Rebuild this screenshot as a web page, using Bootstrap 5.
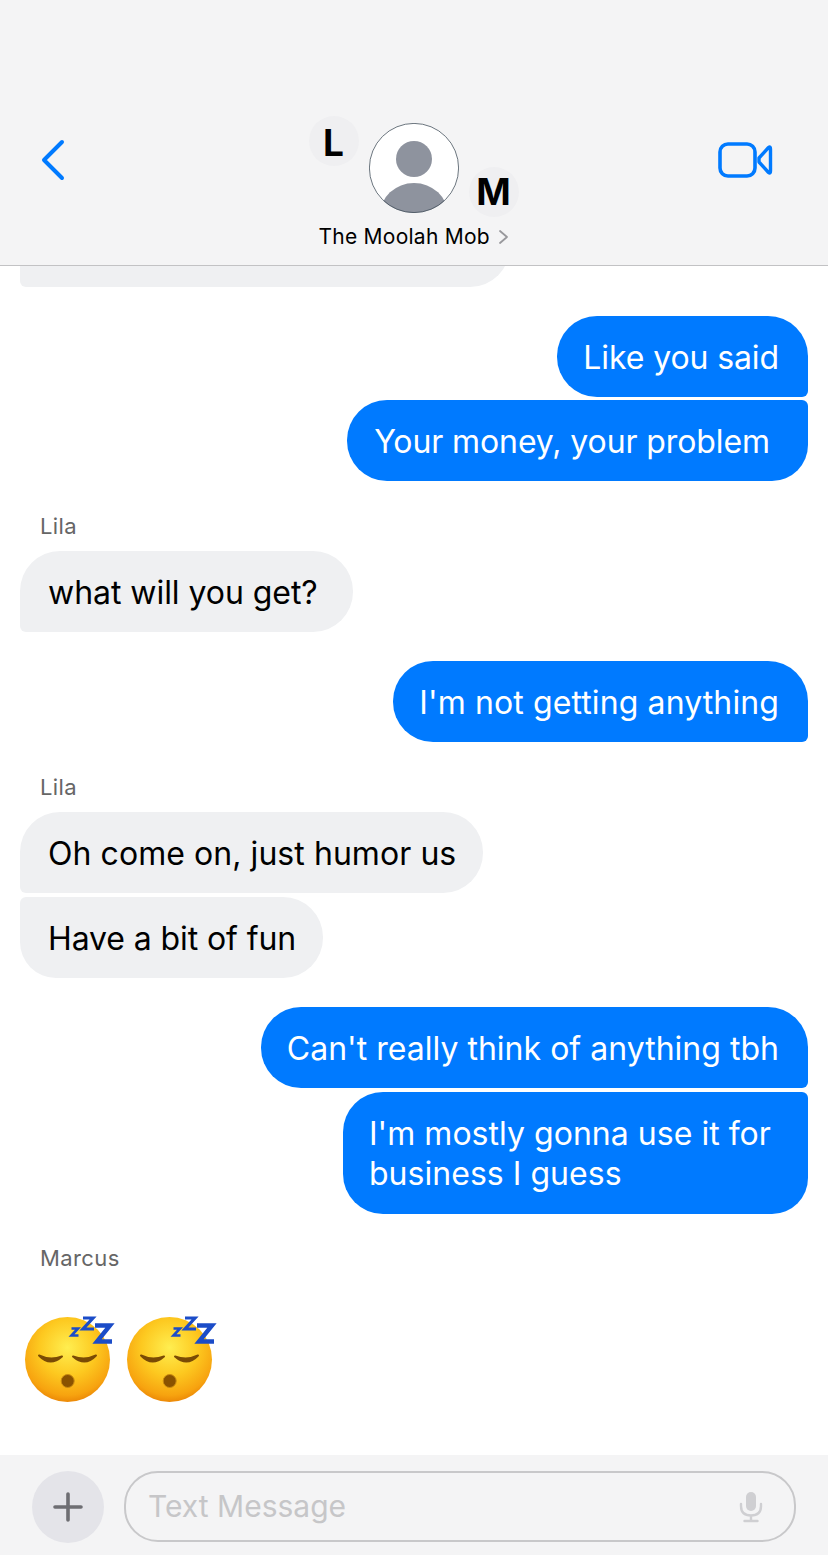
<!DOCTYPE html>
<html lang="en">
<head>
<meta charset="utf-8">
<title>The Moolah Mob</title>
<link href="https://cdn.jsdelivr.net/npm/bootstrap@5.3.0/dist/css/bootstrap.min.css" rel="stylesheet">
<style>
html,body{margin:0;background:#fff}
body{font-family:Inter,"Liberation Sans",sans-serif}
.phone{width:828px;height:1555px;overflow:hidden}
.top-bar{height:266px;flex:none;background:#f4f4f5;border-bottom:1px solid #c2c2c4;padding:0 54px 0 40px;z-index:2}
.back-ico{margin-top:138px;display:block}
.cam-ico{margin-top:139px;display:block}
.group-head{position:relative;width:230px;height:266px;margin-left:43px}
.person{position:absolute;left:69px;top:123px;display:block}
.initial{position:absolute;width:50px;height:50px;border-radius:50%;background:#efeff1;color:#000;font-weight:700;font-size:37px;line-height:50px;text-align:center}
.init-l{left:9px;top:116px;line-height:53px}
.init-m{left:169px;top:167px}
.group-title{position:absolute;left:19px;top:223px;font-size:21px;line-height:28px;letter-spacing:.25px;color:#000;white-space:nowrap}
.title-arrow{position:absolute;left:198px;top:229px;display:block}
.thread{flex:1 1 auto;min-height:0;padding:0 20px}
.bub{font-size:32px;line-height:40px;padding:22px 29px 19px 26px;border-radius:40px;letter-spacing:-.1px}
.mine{background:#007aff;color:#fff;border-bottom-right-radius:6px}
.mine-join{border-top-right-radius:6px;border-bottom-right-radius:36px}
.theirs{background:#eff0f2;color:#000;padding:22px 27px 19px 28px;border-bottom-left-radius:6px}
.theirs-join{border-top-left-radius:6px;border-bottom-left-radius:36px}
.stub{width:490px;height:81px;margin-top:-60px}
.sender{font-size:22px;line-height:26px;letter-spacing:.4px;color:#666;padding-left:20px}
.gap-t{margin-top:3px}
.gap-s{margin-top:4px}
.gap-m{margin-top:29px}
.lead-a{margin-top:32px}
.lead-c{margin-top:31px}
.pad-wide{padding-left:27px;padding-right:38px}
.pad-what{padding-right:35px;letter-spacing:-.05px}
.wrap-w{width:465px;padding-bottom:20px;letter-spacing:.03px}
.ls-not{letter-spacing:.11px}
.ls-oh{letter-spacing:.06px}
.ls-cant{letter-spacing:.02px}
.first-their{margin-top:12px}
.nap{margin-top:45px;margin-left:2px;gap:6px}
.compose{height:100px;flex:none;background:#f4f4f5;padding:16px 32px 13px}
.plus-btn{width:72px;height:72px;background:#e4e4e9;border-radius:50%}
.msg-box{width:672px;height:71px;margin-left:20px;border:2px solid #c8c8ca;border-radius:34px;padding:0 31px 0 22px}
.ph{font-size:30px;color:#c6c6c8}
</style>
</head>
<body>
<div class="phone d-flex flex-column">
  <header class="top-bar d-flex justify-content-between align-items-start">
    <svg class="back-ico" width="28" height="44" viewBox="0 0 28 44"><path d="M22 4 L4 22 L22 40" fill="none" stroke="#007aff" stroke-width="4" stroke-linecap="round" stroke-linejoin="round"/></svg>
    <div class="group-head">
      <div class="initial init-l">L</div>
      <svg class="person" width="90" height="90" viewBox="0 0 90 90">
        <defs><clipPath id="disc"><circle cx="45" cy="45" r="45"/></clipPath></defs>
        <circle cx="45" cy="45" r="45" fill="#fff"/>
        <g clip-path="url(#disc)" fill="#8e939e">
          <circle cx="45" cy="36" r="18"/>
          <ellipse cx="45" cy="92" rx="34" ry="32"/>
        </g>
        <circle cx="45" cy="45" r="44.6" fill="none" stroke="#44505c" stroke-width=".8"/>
      </svg>
      <div class="initial init-m">M</div>
      <div class="group-title">The Moolah Mob</div>
      <svg class="title-arrow" width="12" height="16" viewBox="0 0 12 16"><path d="M2 2 L9 8 L2 14" fill="none" stroke="#98989c" stroke-width="1.8" stroke-linecap="round" stroke-linejoin="round"/></svg>
    </div>
    <svg class="cam-ico" width="56" height="42" viewBox="0 0 56 42">
      <rect x="2" y="5" width="35" height="32" rx="8" fill="none" stroke="#007aff" stroke-width="3.6"/>
      <path d="M41 19 L50.5 8.5 Q52.5 7 52.5 10 V32 Q52.5 35 50.5 33.5 L41 23 Z" fill="none" stroke="#007aff" stroke-width="3.4" stroke-linejoin="round"/>
    </svg>
  </header>

  <main class="thread d-flex flex-column">
    <div class="bub theirs stub"></div>
    <div class="bub mine align-self-end gap-m">Like you said</div>
    <div class="bub mine mine-join pad-wide align-self-end gap-t">Your money, your problem</div>
    <div class="sender lead-a">Lila</div>
    <div class="bub theirs pad-what align-self-start first-their">what will you get?</div>
    <div class="bub mine ls-not align-self-end gap-m">I'm not getting anything</div>
    <div class="sender lead-a">Lila</div>
    <div class="bub theirs ls-oh align-self-start first-their">Oh come on, just humor us</div>
    <div class="bub theirs theirs-join align-self-start gap-s">Have a bit of fun</div>
    <div class="bub mine ls-cant align-self-end gap-m">Can't really think of anything tbh</div>
    <div class="bub mine mine-join wrap-w align-self-end gap-s">I'm mostly gonna use it for business I guess</div>
    <div class="sender lead-c">Marcus</div>
    <div class="nap d-flex">
      <svg width="96" height="90" viewBox="0 0 96 90" role="img" aria-label="sleeping face">
        <defs>
          <radialGradient id="face" cx=".5" cy=".36" r=".66"><stop offset="0" stop-color="#ffee50"/><stop offset=".5" stop-color="#fdc920"/><stop offset=".85" stop-color="#f7a30f"/><stop offset="1" stop-color="#e98205"/></radialGradient>
          <g id="sleep">
            <circle cx="45.500" cy="43.500" r="42.500" fill="url(#face)"/>
            <path d="M17 39.500 Q28 51 40 40.500 Q28 45 17 39.500Z M51 40.500 Q63 51 74 39.500 Q63 45 51 40.500Z" fill="#7a4b05" stroke="#7a4b05" stroke-width="2" stroke-linejoin="round"/>
            <circle cx="45.700" cy="65" r="6.500" fill="#8a5200" stroke="#c98a10" stroke-width="1"/>
            <path d="M49.500 12.500H56L49.500 19.500H56.500" fill="none" stroke="#1b4cc8" stroke-width="2.600"/>
            <path d="M61 2H71L61 13H72" fill="none" stroke="#1b4cc8" stroke-width="3.200"/>
            <path d="M73 9.500H88L75 25.500H90" fill="none" stroke="#1b4cc8" stroke-width="4.400"/>
          </g>
        </defs>
        <use href="#sleep"/>
      </svg>
      <svg width="96" height="90" viewBox="0 0 96 90" role="img" aria-label="sleeping face"><use href="#sleep"/></svg>
    </div>
  </main>

  <footer class="compose d-flex align-items-start">
    <div class="plus-btn d-flex align-items-center justify-content-center flex-none">
      <svg width="32" height="32" viewBox="0 0 32 32"><path d="M16 3V29M3 16H29" stroke="#6e6e73" stroke-width="3.6" stroke-linecap="round"/></svg>
    </div>
    <div class="msg-box d-flex align-items-center justify-content-between">
      <span class="ph">Text Message</span>
      <svg width="24" height="32" viewBox="0 0 24 32"><rect x="7" y="1" width="10" height="19" rx="5" fill="#cfcfd2"/><path d="M2 13V15Q2 24.500 12 24.500Q22 24.500 22 15V13M12 24.500V30M5.500 30H18.500" fill="none" stroke="#cfcfd2" stroke-width="2.400" stroke-linecap="round"/></svg>
    </div>
  </footer>
</div>
<script src="https://cdn.jsdelivr.net/npm/bootstrap@5.3.0/dist/js/bootstrap.bundle.min.js"></script>
</body>
</html>
